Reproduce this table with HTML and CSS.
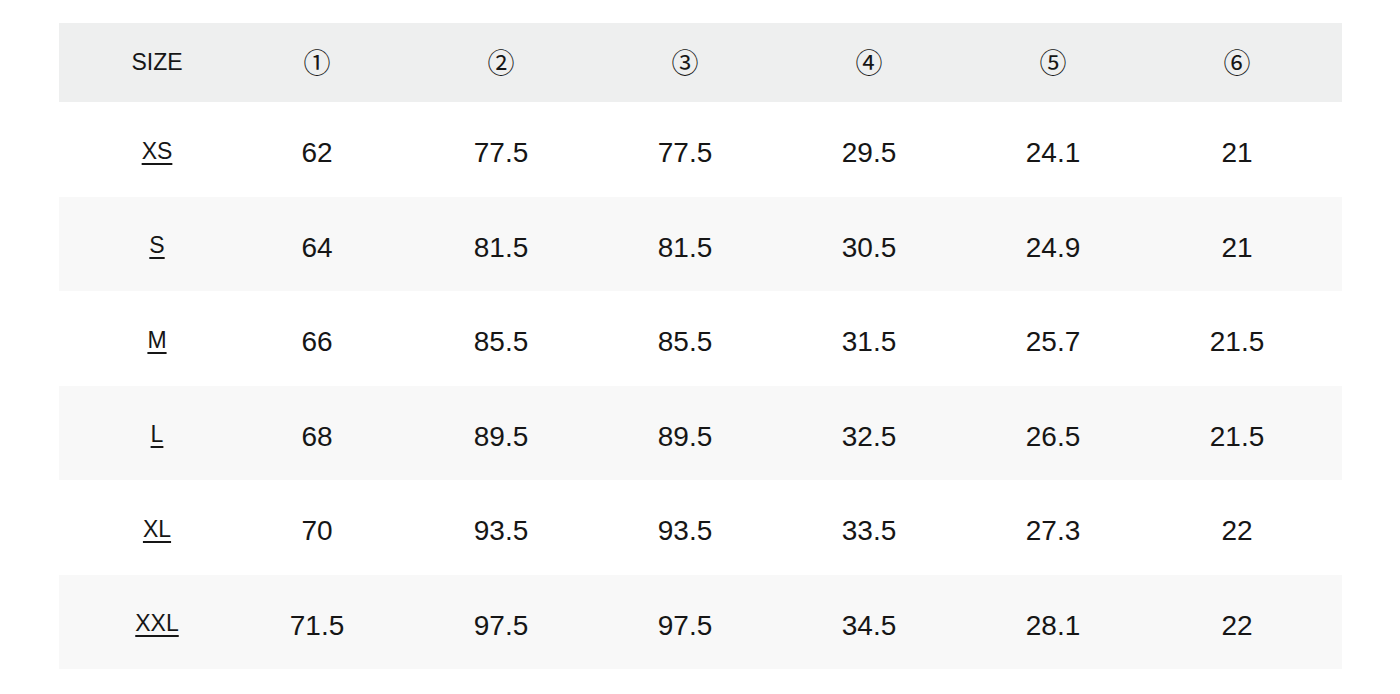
FILE: index.html
```html
<!DOCTYPE html>
<html>
<head>
<meta charset="utf-8">
<link rel="stylesheet" href="styles.css">
</head>
<body>
<div class="table">
  <div class="row head">
    <div class="cell label">SIZE</div>
    <div class="cell circ">①</div>
    <div class="cell circ">②</div>
    <div class="cell circ">③</div>
    <div class="cell circ">④</div>
    <div class="cell circ">⑤</div>
    <div class="cell circ">⑥</div>
  </div>
  <div class="row">
    <div class="cell label"><u>XS</u></div>
    <div class="cell">62</div><div class="cell">77.5</div><div class="cell">77.5</div><div class="cell">29.5</div><div class="cell">24.1</div><div class="cell">21</div>
  </div>
  <div class="row alt">
    <div class="cell label"><u>S</u></div>
    <div class="cell">64</div><div class="cell">81.5</div><div class="cell">81.5</div><div class="cell">30.5</div><div class="cell">24.9</div><div class="cell">21</div>
  </div>
  <div class="row">
    <div class="cell label"><u>M</u></div>
    <div class="cell">66</div><div class="cell">85.5</div><div class="cell">85.5</div><div class="cell">31.5</div><div class="cell">25.7</div><div class="cell">21.5</div>
  </div>
  <div class="row alt">
    <div class="cell label"><u>L</u></div>
    <div class="cell">68</div><div class="cell">89.5</div><div class="cell">89.5</div><div class="cell">32.5</div><div class="cell">26.5</div><div class="cell">21.5</div>
  </div>
  <div class="row">
    <div class="cell label"><u>XL</u></div>
    <div class="cell">70</div><div class="cell">93.5</div><div class="cell">93.5</div><div class="cell">33.5</div><div class="cell">27.3</div><div class="cell">22</div>
  </div>
  <div class="row alt">
    <div class="cell label"><u>XXL</u></div>
    <div class="cell">71.5</div><div class="cell">97.5</div><div class="cell">97.5</div><div class="cell">34.5</div><div class="cell">28.1</div><div class="cell">22</div>
  </div>
</div>
</body>
</html>
```

FILE: styles.css
```css
html, body {
  margin: 0;
  padding: 0;
  background: #ffffff;
}
body {
  font-family: "Liberation Sans", Arial, "Noto Sans CJK JP", sans-serif;
  color: #161616;
  padding: 23px 58px 0 59px;
}
.table {
  width: 1283px;
}
.row {
  display: grid;
  grid-template-columns: 166px repeat(6, 184px);
  padding-right: 13px;
  height: 94.5px;
  align-items: center;
  font-size: 28px;
}
.row.head {
  height: 79px;
  background: #eeefef;
}
.row.alt {
  background: #f8f8f8;
}
.cell {
  text-align: center;
  padding-top: 8px;
}
.cell.label {
  padding-left: 30px;
  font-size: 23px;
  padding-top: 4px;
}
.head .cell {
  padding-top: 0;
}
.head .cell.label {
  padding-top: 0;
}
.cell.label u {
  text-decoration-thickness: 1.5px;
  text-underline-offset: 4px;
}
.cell.circ {
  font-family: "Noto Sans CJK JP", sans-serif;
  font-size: 27px;
  line-height: 1;
  padding-top: 0;
  padding-bottom: 3px;
}
```
